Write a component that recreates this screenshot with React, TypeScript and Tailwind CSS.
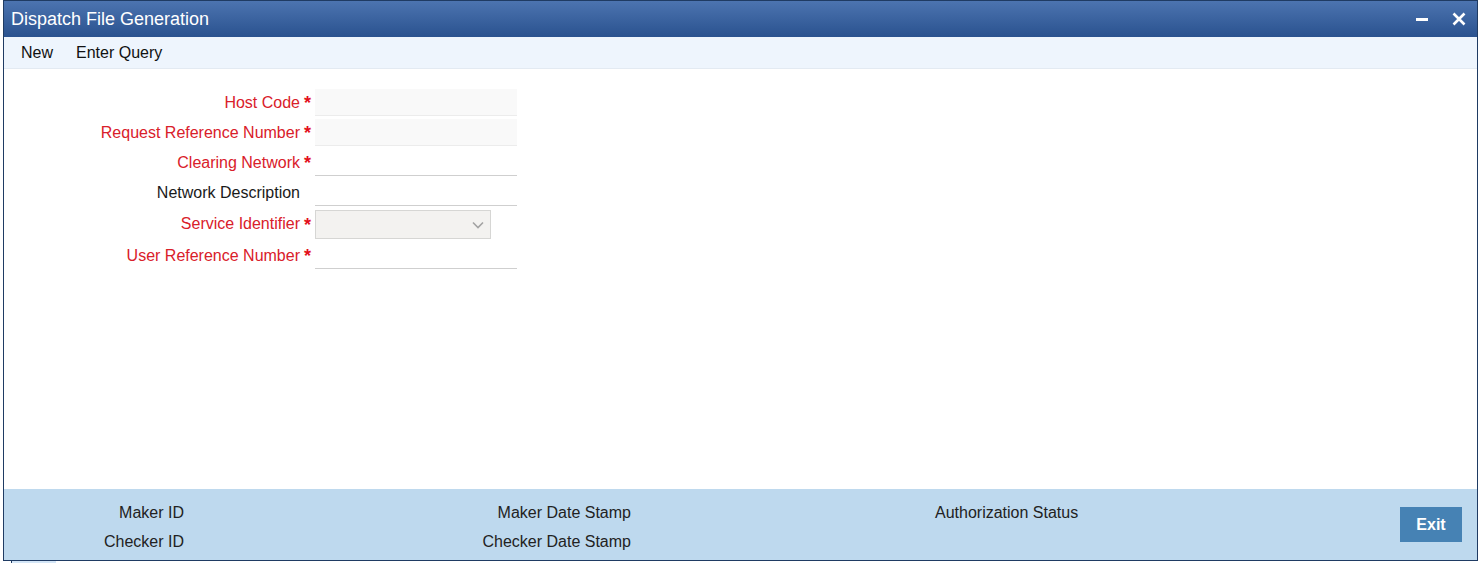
import React from "react";

const font = { fontFamily: '"Liberation Sans", Arial, sans-serif' };

type Field = {
  label: string;
  required?: boolean;
  kind: "readonly" | "text" | "select";
};

const fields: Field[] = [
  { label: "Host Code", required: true, kind: "readonly" },
  { label: "Request Reference Number", required: true, kind: "readonly" },
  { label: "Clearing Network", required: true, kind: "text" },
  { label: "Network Description", kind: "text" },
  { label: "Service Identifier", required: true, kind: "select" },
  { label: "User Reference Number", required: true, kind: "text" },
];

function FormRow({ field }: { field: Field }) {
  const tall = field.kind === "select";
  return (
    <div className={`flex ${tall ? "h-[33px]" : "h-[30px]"}`}>
      <div
        className={`flex w-[296px] items-center justify-end pt-[3px] text-[16px] leading-none ${
          field.required ? "text-[#d9202a]" : "text-[#1a1a1a]"
        }`}
      >
        {field.label}
      </div>
      <div className="flex w-[15px] items-center pl-[4px] pt-[4px] text-[18px] font-bold leading-none text-[#e3101c]">
        {field.required ? "*" : ""}
      </div>
      {field.kind === "select" ? (
        <div className="mt-[4px] flex h-[29px] w-[176px] items-center justify-end border border-[#d6d6d4] bg-[#f3f2f0] pr-[6px]">
          <svg width="12" height="8" viewBox="0 0 12 8" fill="none">
            <path d="M1 1.5 6 6.5 11 1.5" stroke="#a3a3a3" strokeWidth="1.6" />
          </svg>
        </div>
      ) : (
        <div
          className={`mt-[3px] h-[27px] w-[202px] border-b ${
            field.kind === "readonly"
              ? "border-[#ececec] bg-[#f9f9f9]"
              : "border-[#cfcfcf] bg-white"
          }`}
        />
      )}
    </div>
  );
}

export default function App() {
  return (
    <div className="h-[563px] w-[1479px] overflow-hidden bg-white" style={font}>
      <div className="ml-[3px] flex h-[561px] w-[1475px] flex-col border border-[#1f3b63]">
        {/* title bar */}
        <div className="flex h-[36px] items-center justify-between bg-gradient-to-b from-[#4c74b0] to-[#2a528f] pl-[7px] pr-[11px]">
          <span className="text-[18px] leading-none text-white">Dispatch File Generation</span>
          <div className="flex items-center gap-[24px]">
            <svg width="12" height="12" viewBox="0 0 12 12">
              <rect x="0" y="5" width="12" height="3" fill="#fff" />
            </svg>
            <svg width="14" height="14" viewBox="0 0 14 14">
              <path d="M1.5 1.5 12.5 12.5M12.5 1.5 1.5 12.5" stroke="#fff" strokeWidth="2.6" />
            </svg>
          </div>
        </div>

        {/* toolbar */}
        <div className="flex h-[32px] items-center gap-[23px] border-b border-[#e3eaf2] bg-[#eef5fd] pl-[17px] pt-[1px] text-[16px] text-[#111]">
          <span>New</span>
          <span>Enter Query</span>
        </div>

        {/* form */}
        <div className="flex-1 pt-[17px]">
          {fields.map((f) => (
            <FormRow key={f.label} field={f} />
          ))}
        </div>

        {/* footer */}
        <div className="flex h-[71px] bg-[#bed9ee] pt-[9px] text-[16px] text-[#222]">
          <div className="flex w-[180px] flex-col items-end">
            <span className="flex h-[29px] items-center">Maker ID</span>
            <span className="flex h-[29px] items-center">Checker ID</span>
          </div>
          <div className="flex w-[447px] flex-col items-end">
            <span className="flex h-[29px] items-center">Maker Date Stamp</span>
            <span className="flex h-[29px] items-center">Checker Date Stamp</span>
          </div>
          <div className="flex flex-col pl-[304px]">
            <span className="flex h-[29px] items-center">Authorization Status</span>
          </div>
          <div className="ml-auto mr-[15px] mt-[9px]">
            <button className="flex h-[35px] w-[62px] items-center justify-center bg-[#4682b4] text-[16px] font-bold text-white">
              Exit
            </button>
          </div>
        </div>
      </div>
      <div className="ml-[11px] flex h-[2px]">
        <div className="w-[45px] border-l border-[#1f3b63] bg-[#d4e6f7]" />
      </div>
    </div>
  );
}
